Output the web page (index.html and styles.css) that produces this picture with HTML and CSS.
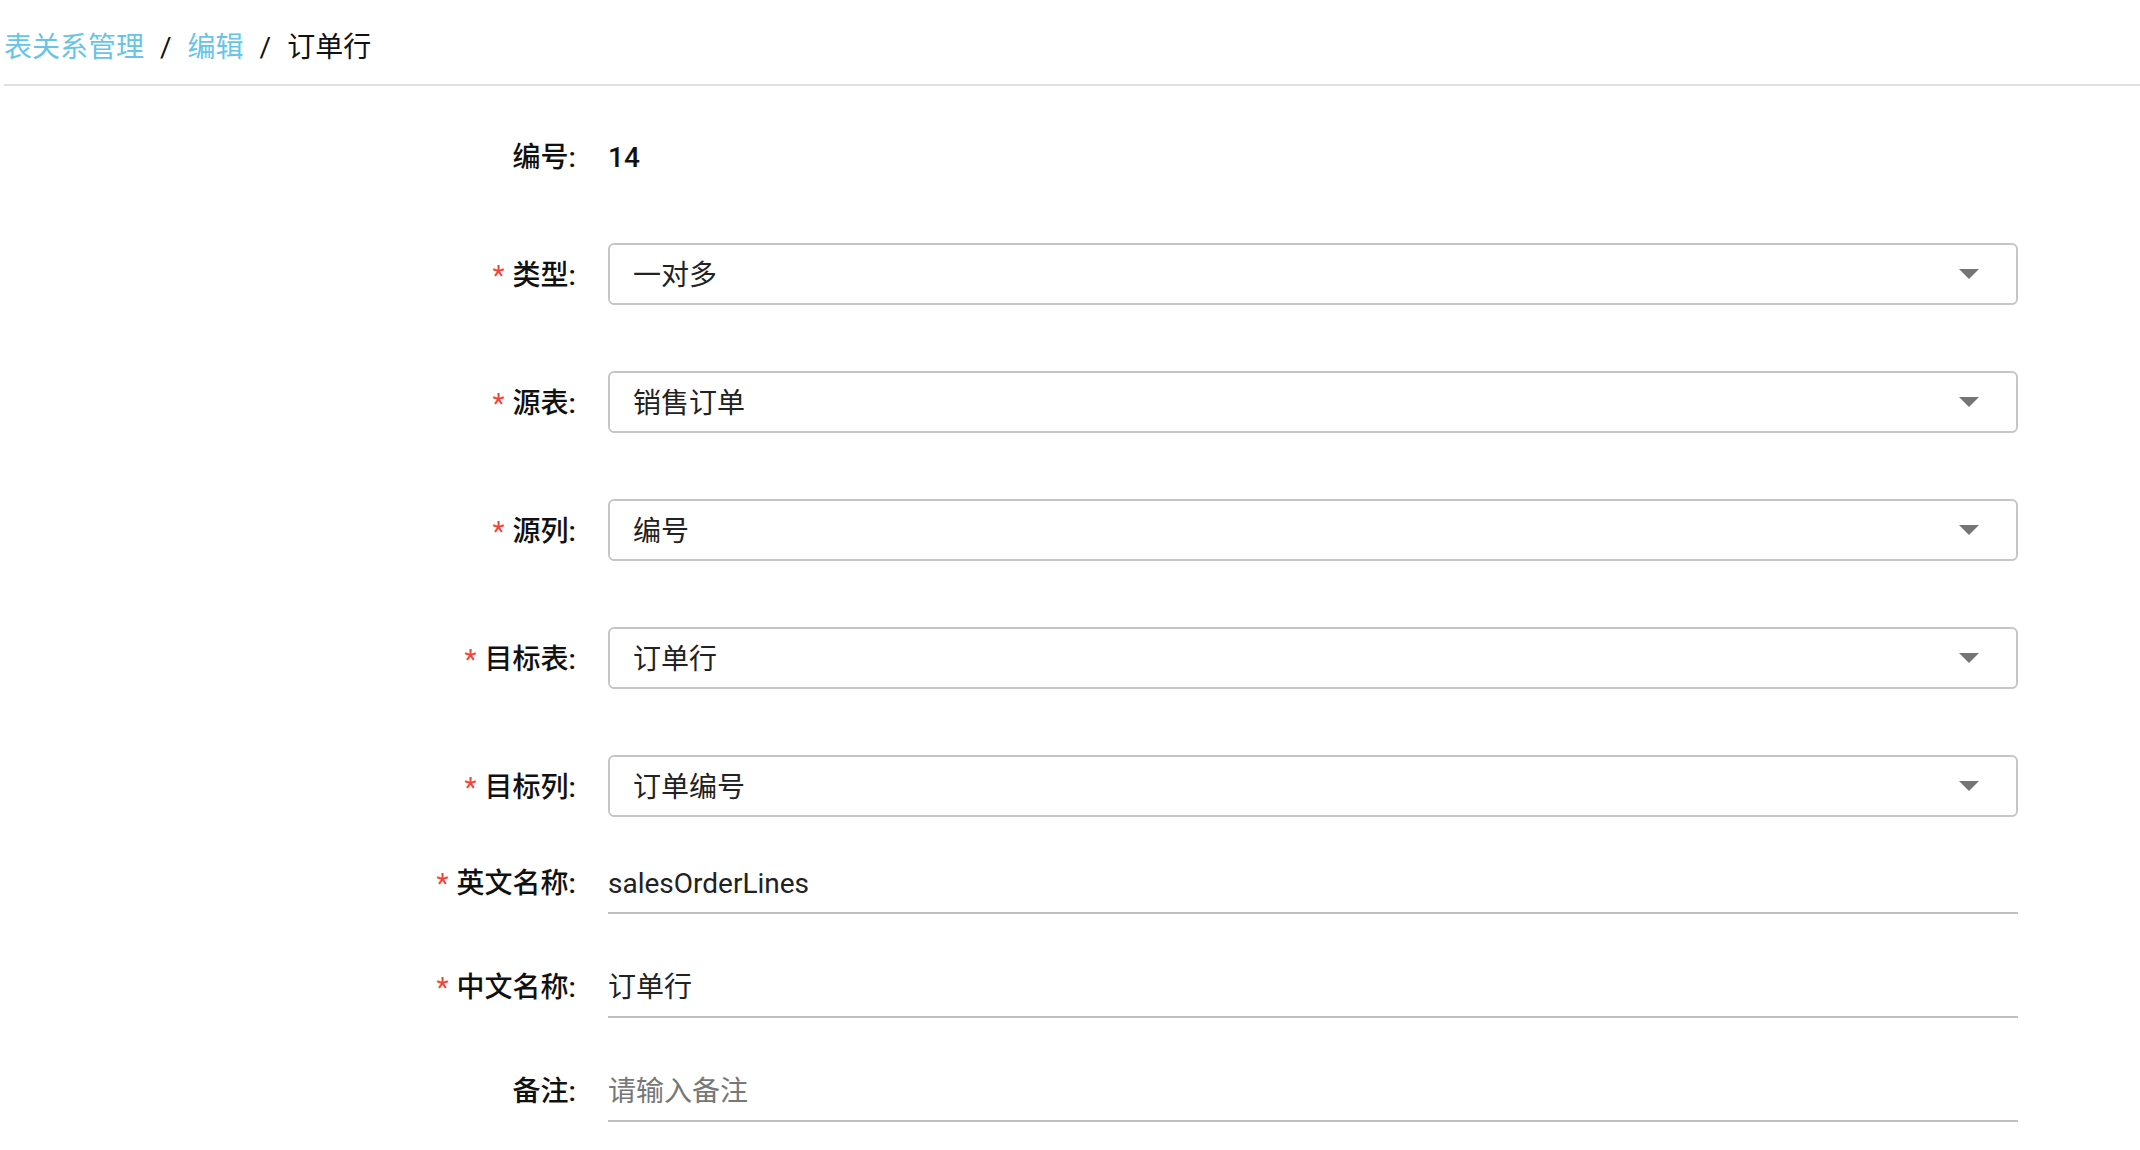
FILE: index.html
```html
<!DOCTYPE html>
<html lang="zh-CN">
<head>
<meta charset="utf-8">
<title>订单行</title>
<link rel="stylesheet" href="styles.css">
</head>
<body>
<div class="page">
  <nav class="breadcrumb">
    <a class="crumb crumb-link">表关系管理</a>
    <span class="sep">/</span>
    <a class="crumb crumb-link">编辑</a>
    <span class="sep">/</span>
    <span class="crumb crumb-current">订单行</span>
  </nav>

  <form class="form">
    <div class="item item-static">
      <label class="label">编号:</label>
      <div class="control"><span class="static-value">14</span></div>
    </div>

    <div class="item item-select">
      <label class="label"><span class="req">*</span>类型:</label>
      <div class="control">
        <div class="select"><span class="select-value">一对多</span><svg class="arrow" viewBox="0 0 20 10" width="20" height="10"><polygon points="0,0 20,0 10,10"/></svg></div>
      </div>
    </div>

    <div class="item item-select">
      <label class="label"><span class="req">*</span>源表:</label>
      <div class="control">
        <div class="select"><span class="select-value">销售订单</span><svg class="arrow" viewBox="0 0 20 10" width="20" height="10"><polygon points="0,0 20,0 10,10"/></svg></div>
      </div>
    </div>

    <div class="item item-select">
      <label class="label"><span class="req">*</span>源列:</label>
      <div class="control">
        <div class="select"><span class="select-value">编号</span><svg class="arrow" viewBox="0 0 20 10" width="20" height="10"><polygon points="0,0 20,0 10,10"/></svg></div>
      </div>
    </div>

    <div class="item item-select">
      <label class="label"><span class="req">*</span>目标表:</label>
      <div class="control">
        <div class="select"><span class="select-value">订单行</span><svg class="arrow" viewBox="0 0 20 10" width="20" height="10"><polygon points="0,0 20,0 10,10"/></svg></div>
      </div>
    </div>

    <div class="item item-select item-select-last">
      <label class="label"><span class="req">*</span>目标列:</label>
      <div class="control">
        <div class="select"><span class="select-value">订单编号</span><svg class="arrow" viewBox="0 0 20 10" width="20" height="10"><polygon points="0,0 20,0 10,10"/></svg></div>
      </div>
    </div>

    <div class="item item-text">
      <label class="label"><span class="req">*</span>英文名称:</label>
      <div class="control"><div class="text-input">salesOrderLines</div></div>
    </div>

    <div class="item item-text">
      <label class="label"><span class="req">*</span>中文名称:</label>
      <div class="control"><div class="text-input">订单行</div></div>
    </div>

    <div class="item item-text">
      <label class="label">备注:</label>
      <div class="control"><div class="text-input placeholder">请输入备注</div></div>
    </div>
  </form>
</div>
</body>
</html>
```

FILE: styles.css
```css
html, body {
  margin: 0;
  padding: 0;
  background: #ffffff;
}

body {
  font-family: Roboto, "Noto Sans CJK SC", sans-serif;
  color: #111111;
}

.page {
  padding-left: 4px;
}

.breadcrumb {
  display: flex;
  align-items: center;
  font-size: 28px;
  line-height: 40px;
  padding-top: 28px;
  padding-bottom: 16px;
  border-bottom: 2px solid #e0e0e0;
}

.crumb-link {
  color: #67c4e6;
  text-decoration: none;
}

.crumb-current {
  color: #111111;
}

.sep {
  color: #111111;
  padding: 0 16px;
}

.form {
  padding-top: 52px;
}

.item {
  display: flex;
  align-items: flex-start;
}

.label {
  flex: none;
  width: 604px;
  box-sizing: border-box;
  padding-right: 32px;
  text-align: right;
  font-size: 28px;
  font-weight: 500;
  color: #111111;
  line-height: 40px;
}

.req {
  color: #f44336;
  font-weight: 400;
  margin-right: 8px;
}

.control {
  flex: none;
  width: 1410px;
}

.item-static {
  margin-bottom: 65px;
}

.static-value {
  font-size: 28px;
  line-height: 40px;
  font-weight: 500;
  color: #111111;
}

.item-select {
  margin-bottom: 66px;
}

.item-select .label {
  padding-top: 4px;
  line-height: 58px;
}

.item-select-last {
  margin-bottom: 47px;
}

.select {
  height: 62px;
  box-sizing: border-box;
  border: 2px solid #c6c6c6;
  border-radius: 6px;
  display: flex;
  align-items: center;
  justify-content: space-between;
  padding: 0 37px 0 23px;
}

.select-value {
  font-size: 28px;
  line-height: 40px;
  padding-top: 3px;
  color: #222222;
}

.arrow {
  display: block;
  fill: #757575;
}

.item-text {
  margin-bottom: 54px;
}

.text-input {
  font-size: 28px;
  line-height: 40px;
  color: #222222;
  padding-bottom: 8px;
  border-bottom: 2px solid #bfbfbf;
}

.placeholder {
  color: #777777;
}
```
